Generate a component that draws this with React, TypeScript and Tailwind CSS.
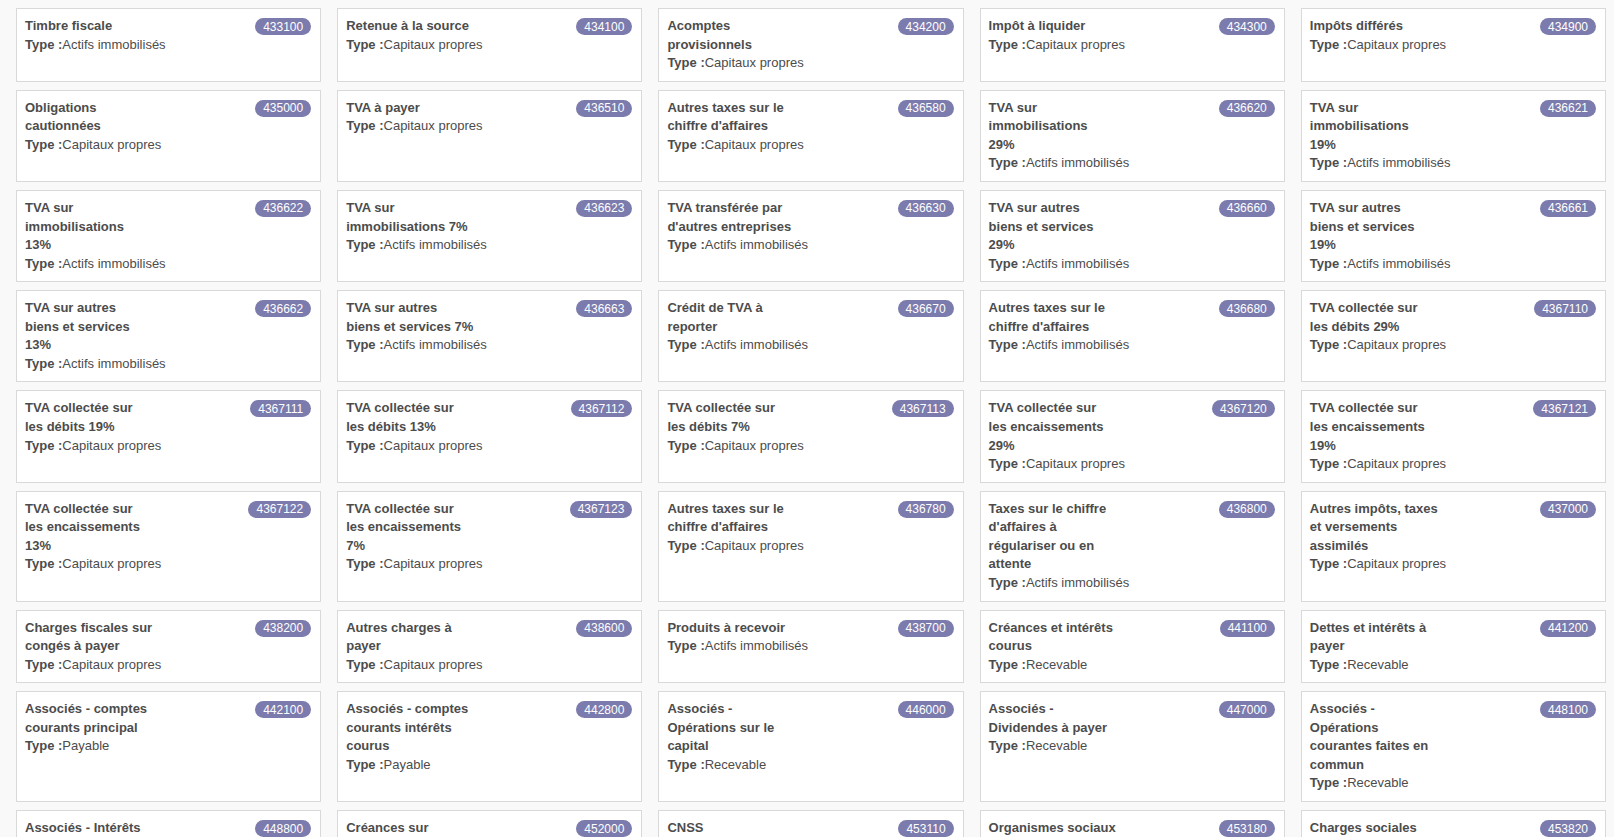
import React from "react";

type Acc = { t: string[]; code: string; type: string };

const A = "Actifs immobilisés";
const C = "Capitaux propres";
const R = "Recevable";
const P = "Payable";

const data: Acc[] = [
  { t: ["Timbre fiscale"], code: "433100", type: A },
  { t: ["Retenue à la source"], code: "434100", type: C },
  { t: ["Acomptes", "provisionnels"], code: "434200", type: C },
  { t: ["Impôt à liquider"], code: "434300", type: C },
  { t: ["Impôts différés"], code: "434900", type: C },

  { t: ["Obligations", "cautionnées"], code: "435000", type: C },
  { t: ["TVA à payer"], code: "436510", type: C },
  { t: ["Autres taxes sur le", "chiffre d'affaires"], code: "436580", type: C },
  { t: ["TVA sur", "immobilisations", "29%"], code: "436620", type: A },
  { t: ["TVA sur", "immobilisations", "19%"], code: "436621", type: A },

  { t: ["TVA sur", "immobilisations", "13%"], code: "436622", type: A },
  { t: ["TVA sur", "immobilisations 7%"], code: "436623", type: A },
  { t: ["TVA transférée par", "d'autres entreprises"], code: "436630", type: A },
  { t: ["TVA sur autres", "biens et services", "29%"], code: "436660", type: A },
  { t: ["TVA sur autres", "biens et services", "19%"], code: "436661", type: A },

  { t: ["TVA sur autres", "biens et services", "13%"], code: "436662", type: A },
  { t: ["TVA sur autres", "biens et services 7%"], code: "436663", type: A },
  { t: ["Crédit de TVA à", "reporter"], code: "436670", type: A },
  { t: ["Autres taxes sur le", "chiffre d'affaires"], code: "436680", type: A },
  { t: ["TVA collectée sur", "les débits 29%"], code: "4367110", type: C },

  { t: ["TVA collectée sur", "les débits 19%"], code: "4367111", type: C },
  { t: ["TVA collectée sur", "les débits 13%"], code: "4367112", type: C },
  { t: ["TVA collectée sur", "les débits 7%"], code: "4367113", type: C },
  { t: ["TVA collectée sur", "les encaissements", "29%"], code: "4367120", type: C },
  { t: ["TVA collectée sur", "les encaissements", "19%"], code: "4367121", type: C },

  { t: ["TVA collectée sur", "les encaissements", "13%"], code: "4367122", type: C },
  { t: ["TVA collectée sur", "les encaissements", "7%"], code: "4367123", type: C },
  { t: ["Autres taxes sur le", "chiffre d'affaires"], code: "436780", type: C },
  { t: ["Taxes sur le chiffre", "d'affaires à", "régulariser ou en", "attente"], code: "436800", type: A },
  { t: ["Autres impôts, taxes", "et versements", "assimilés"], code: "437000", type: C },

  { t: ["Charges fiscales sur", "congés à payer"], code: "438200", type: C },
  { t: ["Autres charges à", "payer"], code: "438600", type: C },
  { t: ["Produits à recevoir"], code: "438700", type: A },
  { t: ["Créances et intérêts", "courus"], code: "441100", type: R },
  { t: ["Dettes et intérêts à", "payer"], code: "441200", type: R },

  { t: ["Associés - comptes", "courants principal"], code: "442100", type: P },
  { t: ["Associés - comptes", "courants intérêts", "courus"], code: "442800", type: P },
  { t: ["Associés -", "Opérations sur le", "capital"], code: "446000", type: R },
  { t: ["Associés -", "Dividendes à payer"], code: "447000", type: R },
  { t: ["Associés -", "Opérations", "courantes faites en", "commun"], code: "448100", type: R },

  { t: ["Associés - Intérêts", "courus"], code: "448800", type: P },
  { t: ["Créances sur", "cessions"], code: "452000", type: R },
  { t: ["CNSS"], code: "453110", type: P },
  { t: ["Organismes sociaux"], code: "453180", type: P },
  { t: ["Charges sociales"], code: "453820", type: P },
];

function Card({ a }: { a: Acc }) {
  return (
    <div className="border border-[#d9d9d9] bg-white p-2">
      <div className="flex items-start justify-between">
        <div className="font-bold">
          {a.t.map((l, i) => (
            <div key={i} className="whitespace-nowrap">
              {l}
            </div>
          ))}
        </div>
        <span className="mt-px mr-px flex h-[17px] items-center rounded-full bg-[#7c7bad] px-2 text-[12px] leading-none text-white">
          {a.code}
        </span>
      </div>
      <div className="whitespace-nowrap">
        <span className="font-bold">Type :</span>
        {a.type}
      </div>
    </div>
  );
}

export default function App() {
  return (
    <div className="min-h-screen bg-[#f9f9f9] font-['Liberation_Sans',Arial,sans-serif] text-[13px] leading-[18.57px] text-[#4c4c4c]">
      <div className="grid grid-cols-5 gap-x-4 gap-y-2 pt-2 pl-4 pr-2 pb-2">
        {data.map((a, i) => (
          <Card key={i} a={a} />
        ))}
      </div>
    </div>
  );
}
